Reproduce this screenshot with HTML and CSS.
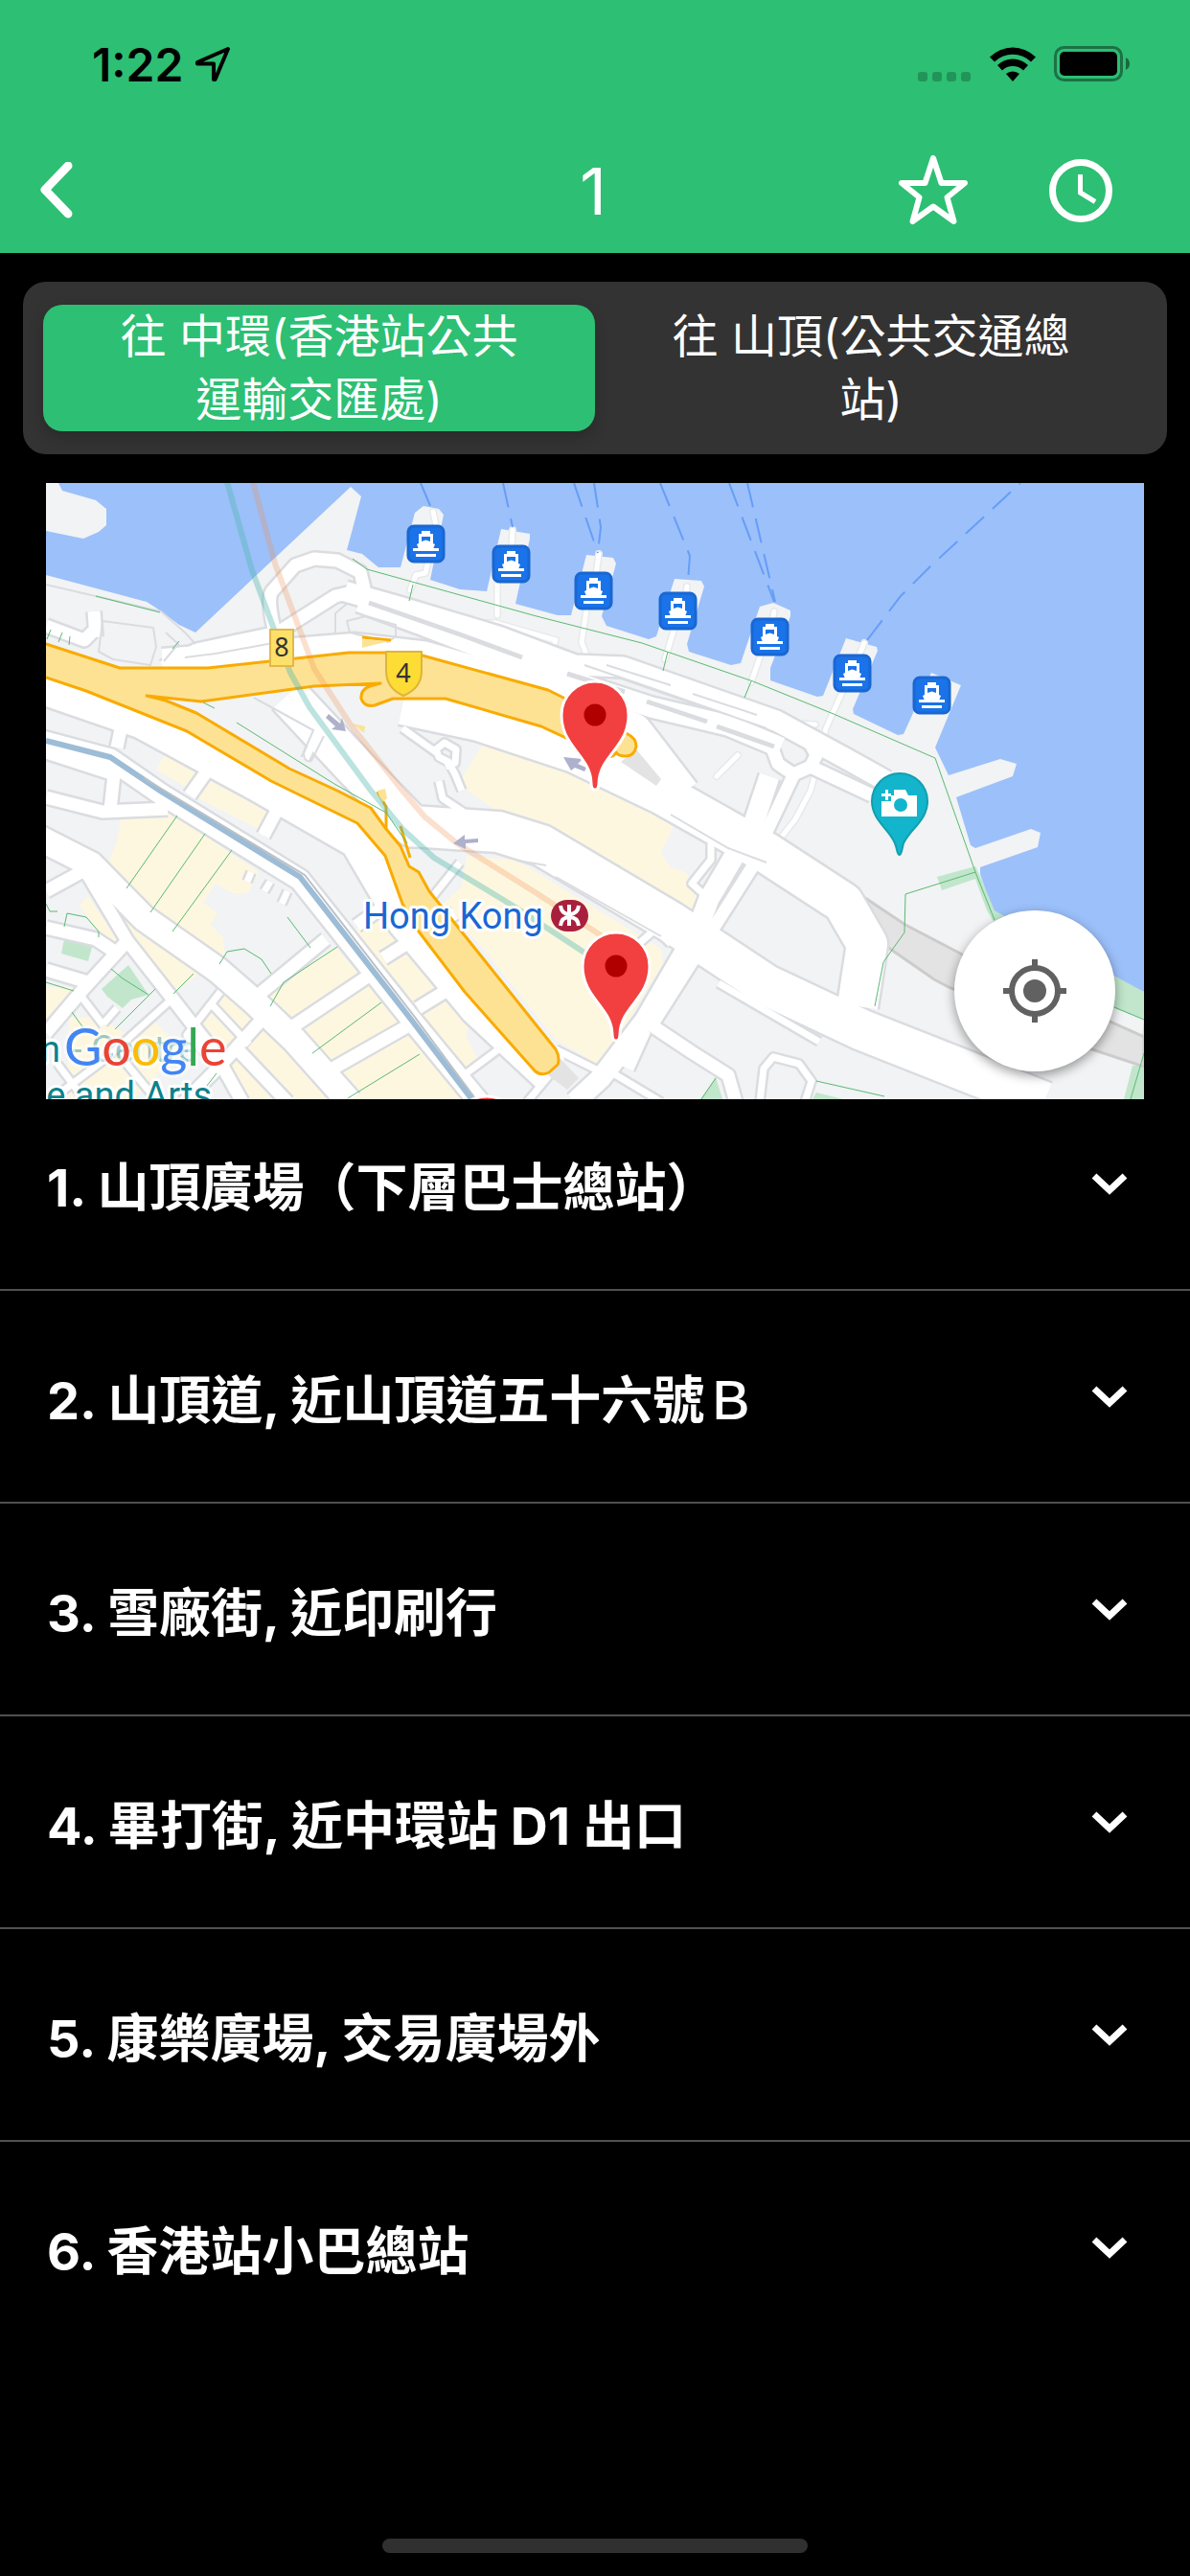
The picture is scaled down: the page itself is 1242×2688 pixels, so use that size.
FILE: index.html
```html
<!DOCTYPE html>
<html lang="zh-Hant">
<head>
    <meta charset="UTF-8">
    <meta name="viewport" content="width=device-width, initial-scale=1.0">
    <title>路線 1</title>
    <link rel="stylesheet" href="styles.css">
</head>
<body>
    <header class="header">
        <div class="status-bar">
            <div class="status-left">
                <span class="time">1:22</span>
                <svg width="38" height="38" viewBox="0 0 38 38"><path d="M35 3 L3 17 V18.500 H20 V35 H21.500 Z" fill="none" stroke="#000" stroke-width="4" stroke-linejoin="round"/></svg>
            </div>
            <div class="status-right">
                <svg class="cell" width="56" height="38" viewBox="0 0 56 38" fill="#000" opacity=".22">
                    <rect x="0" y="27" width="10" height="10" rx="3"/>
                    <rect x="15" y="27" width="10" height="10" rx="3"/>
                    <rect x="30" y="27" width="10" height="10" rx="3"/>
                    <rect x="45" y="27" width="10" height="10" rx="3"/>
                </svg>
                <svg width="48" height="38" viewBox="0 0 48 38">
                    <path d="M0 11.500 A34 34 0 0 1 48 11.500 L43 16.500 A27 27 0 0 0 5 16.500 Z"/>
                    <path d="M8 20 A23 23 0 0 1 40 20 L35 25.500 A16 16 0 0 0 13 25.500 Z"/>
                    <path d="M17 29 A11 11 0 0 1 31 29 L24 37 Z"/>
                </svg>
                <svg width="80" height="38" viewBox="0 0 80 38">
                    <rect x="1.500" y="1.500" width="69" height="34" rx="9" fill="none" stroke="#000" stroke-opacity=".4" stroke-width="3"/>
                    <rect x="6" y="6" width="60" height="25" rx="5"/>
                    <path d="M75 12 Q79 14 79 18.500 Q79 23 75 25 Z" opacity=".45"/>
                </svg>
            </div>
        </div>
        <nav class="nav-bar">
            <button class="icon-btn back" aria-label="返回">
                <svg width="36" height="60" viewBox="0 0 36 60"><path d="M30 4 L6 29 L30 54" fill="none" stroke="#fff" stroke-width="9" stroke-linecap="round" stroke-linejoin="round"/></svg>
            </button>
            <h1>1</h1>
            <div class="nav-actions">
                <button class="icon-btn" aria-label="收藏">
                    <svg width="74" height="74" viewBox="0 0 74 74"><path d="M37 3 L45.500 29 H70 L51.500 44 L58.500 69 L37 53.500 L15.500 69 L22.500 44 L4 29 H28.500 Z" fill="none" stroke="#fff" stroke-width="6" stroke-linejoin="round"/></svg>
                </button>
                <button class="icon-btn" aria-label="時間表">
                    <svg width="66" height="66" viewBox="0 0 66 66" fill="none" stroke="#fff"><circle cx="33" cy="33" r="29.500" stroke-width="7"/><path d="M32.500 16 V35 L48 44.500" stroke-width="5"/></svg>
                </button>
            </div>
        </nav>
    </header>

    <div class="tabs">
        <button class="tab active">往 中環(香港站公共運輸交匯處)</button>
        <button class="tab">往 山頂(公共交通總站)</button>
    </div>

    <section class="map">
        <svg class="map-canvas" viewBox="48 504 1146 643">
            <defs>
                <g id="ferry">
                    <rect x="1" y="1" width="37" height="37" rx="6" fill="#1a73e8" stroke="#1967d2" stroke-width="3"/>
                    <path d="M15 6 H24 V9 H27 V19 L29 20 L27 25 H12 L10 20 L12 19 V9 H15 Z M15 12 V17 L19.500 15.500 L24 17 V12 Z" fill="#fff" fill-rule="evenodd"/>
                    <path d="M6 25.500 H33 M9 31.500 H30" stroke="#fff" stroke-width="3"/>
                </g>
                <g id="pin">
                    <path d="M0 78 C-3 78 -4 75 -4 71 C-5 42 -35 34 -35 0 A35 35 0 0 1 35 0 C35 34 5 42 4 71 C4 75 3 78 0 78 Z" fill="#f23f3f" stroke="#fff" stroke-width="3"/>
                    <circle r="11.500" fill="#b00000"/>
                </g>
                <!-- streets, drawn twice: casing below, white on top -->
                <g id="roads" fill="none" stroke-linejoin="round">
                    <path class="w44" d="M300 725 L370 800 L430 862 L520 868 L565 882 L700 962 L800 1028 L900 1075 L1090 1150"/>
                    <path class="w44" d="M420 735 L500 752 L600 785 L690 828 L800 890 L880 942 L905 985 L895 1050"/>
                    <path class="w44" d="M40 712 L150 750 L270 815 L375 875 L425 960 L500 1050 L575 1120"/>
                    <path class="w44" d="M170 698 L370 682 L440 690 L570 728 L660 765 L710 830"/>
                    <path class="w20" d="M360 617 L420 634 L520 664 L600 694 L650 696 L810 752 L880 790 L925 815"/>
                    <path class="w20" d="M375 628 L440 652 L570 702 L680 738 L760 757 L815 780"/>
                    <path class="w14" d="M170 696 L205 678 L290 660 L350 622 L380 615 M287 660 Q278 625 284 617 L308 590 L328 583 L352 585 L376 597 L381 618"/>
                    <path class="w14" d="M100 665 L98 638 M98 658 L88 668 L48 653"/>
                    <path class="w14" d="M812 755 L840 765 L852 788 L846 800 L828 808 L812 797 L805 778 M830 805 L800 868 M846 800 L910 830"/>
                    <path class="w20" d="M803 810 L787 858 L740 938 L727 972 L673 1065 L627 1125 L600 1150"/>
                    <path class="w14" d="M785 905 L680 1070 L722 1098 L760 1122 L768 1150 M673 1075 L655 1115"/>
                    <path class="w8" d="M750 1026 L855 1087 M793 1150 L797 1115 L807 1103 L834 1110 L847 1128 L840 1150"/>
                    <path class="w8" d="M742 880 L742 897 L722 922 L740 938 M655 995 L695 960 M565 880 L640 925 L700 985"/>
                    <path class="w20" d="M40 772 L115 792 L167 828 L313 918 L430 1065 L500 1150"/>
                    <path class="w26" d="M40 874 L95 902 L150 958 L227 1012 L265 1045 L307 1085 L365 1150"/>
                    <path class="w14" d="M90 910 L133 982 L180 1042 L225 1100 L253 1150"/>
                    <path class="w14" d="M48 832 L107 847 L175 844 M115 845 L119 808 L48 785 M130 742 L122 780 M225 792 L198 830 M293 838 L275 872"/>
                    <path class="w14" d="M340 980 L270 1038 M385 1018 L300 1075 M430 1068 L335 1122 M48 930 L90 907"/>
                    <path class="w14" d="M48 1078 L87 1032 L130 985 M48 968 L100 980 L118 992 M48 1012 L92 1025"/>
                    <path class="w14" d="M275 1062 L227 1115 L192 1150 M248 1095 L300 1150 M372 966 L420 932 M400 1000 L475 953 M436 1052 L480 1025"/>
                    <path class="w8" d="M85 1040 L108 1070 M108 1068 L122 1052 M180 1042 L110 1105 L50 1150 M60 1110 L90 1150 M132 1110 L165 1150 M230 1035 L195 1080 L225 1110 M218 1045 L260 1090"/>
                    <path class="w8" d="M495 855 L462 833 L458 815 M482 825 L475 808 L468 795 L458 790 L455 782 L464 775 L476 782 L475 796 L465 800 M420 760 L455 785"/>
                    <path class="w8" d="M480 900 L440 950 M425 880 L505 878 M527 1090 L480 1125 M575 1120 L550 1150 M640 1120 L690 1150 M580 1095 L630 1120"/>
                    <path class="w8" d="M262 910 L258 920 M282 920 L276 930 M300 930 L294 943 M319 792 L321 788 L331 765"/>
                </g>
            </defs>

            <rect x="48" y="504" width="1146" height="643" fill="#9cc0fa"/>
            <!-- land -->
            <path fill="#f1f3f4" d="M48 504 H61 L65 512 L100 522 L111 531 V548 L103 555 L87 562 L48 554 Z"/>
            <path fill="#f1f3f4" d="M48 600 L153 628 L164 635 L187 652 L204 660 L366 508 L377 518 L362 574 L378 578 L395 592 H418 L433 535 L442 528 L458 531 L463 537 L449 605 L480 615 L508 617 L523 552 L553 557 V562 L538 630 L582 642 H596 L612 579 L640 582 L643 588 L628 643 L633 653 L677 667 L685 664 L704 604 L732 606 L735 612 L717 672 L719 680 L763 694 L773 692 L793 633 L807 629 L825 637 V643 L804 697 V710 L853 727 L859 726 L883 666 L915 675 L916 679 L890 740 L891 745 L937 767 L943 766 L972 702 L1003 715 L976 780 L990 809 L1044 792 L1061 797 L1057 810 L998 832 L1013 882 L1018 885 L1076 865 L1086 869 L1083 884 L1023 905 V912 L1036 951 L1047 957 L1163 1023 L1194 1035 V1147 H48 Z"/>
            <!-- buildings -->
            <g fill="#fef7e0">
                <path d="M128 845 H173 L270 910 L258 933 L243 932 L225 922 L212 942 L227 953 L220 965 L232 977 L235 995 L227 1010 L112 903 L122 878 Z"/>
                <path d="M273 1042 L350 988 L490 1147 H360 Z M225 1110 L280 1070 L350 1147 H250 Z M98 922 L227 1005 L180 1035 Z M83 945 L92 935 L122 980 L115 988 Z"/>
                <path d="M48 1030 H85 L60 1065 L48 1075 Z M72 1062 H105 L140 1085 L160 1065 L190 1095 L140 1147 H70 Z M205 1060 L232 1035 L265 1065 L235 1095 Z"/>
                <path d="M178 776 L213 793 L195 822 L163 803 Z M222 800 L290 835 L270 865 L205 832 Z"/>
                <path d="M370 970 L425 945 L475 1040 L490 1070 L486 1080 L500 1108 L490 1130 L405 1020 Z"/>
                <path d="M510 767 L540 778 L620 817 L667 844 L685 845 L703 862 L690 890 L700 905 L715 910 L733 935 L720 960 L577 875 L517 845 L485 823 L482 812 Z"/>
                <path d="M487 893 L540 898 L690 990 L692 1005 L627 1112 L580 1085 L500 985 L460 945 L482 925 Z"/>
            </g>
            <!-- parks -->
            <path fill="#c1e6cc" d="M67 980 L96 988 L92 1003 L64 995 Z M106 1032 L134 1007 L155 1038 L137 1043 L128 1052 L112 1040 Z M978 915 L1018 904 L1022 912 L1038 950 L1050 957 L1194 1035 V1064 L1163 1052 L1037 962 L1030 950 L1018 917 L983 929 Z M1182 1112 L1190 1112 L1194 1060 V1147 H1173 Z M731 1147 L747 1124 L754 1147 Z M852 1140 L880 1147 H848 Z"/>
            <!-- tunnel road -->
            <path d="M885 925 L945 965 L1012 1000 L1194 1082 V1113 L1140 1095 L990 1030 L975 1022 L900 970 Z" fill="#e3e3e3" stroke="#ccc" stroke-width="3"/>

            <!-- pier lanes -->
            <g fill="none" stroke-linecap="round" stroke-linejoin="round">
                <path stroke="#e8eaea" stroke-width="8" d="M452 534 L455 548 M447 585 L444 598 L434 600 L428 616 M535 553 L534 570 M519 605 L519 642 M625 578 L622 600 M612 637 L607 670 L612 683 M717 612 L716 620 M704 655 L694 688 M808 638 L806 648 M794 683 L784 712 M902 671 L897 683 M880 720 L862 760 L855 790 L846 825 L830 855 L812 878 M497 650 L517 650 L580 668 L578 674 L562 668 L557 680 M770 788 L748 810 M820 755 L851 756"/>
                <path stroke="#fff" stroke-width="5" d="M452 534 L455 548 M447 585 L444 598 L434 600 L428 616 M535 553 L534 570 M519 605 L519 642 M625 578 L622 600 M612 637 L607 670 L612 683 M717 612 L716 620 M704 655 L694 688 M808 638 L806 648 M794 683 L784 712 M902 671 L897 683 M880 720 L862 760 L855 790 L846 825 L830 855 L812 878 M497 650 L517 650 L580 668 L578 674 L562 668 L557 680 M770 788 L748 810 M820 755 L851 756"/>
            </g>

            <use href="#roads" class="casing"/>
            <use href="#roads" class="street"/>
            <path d="M648 795 L664 782 L690 813 L685 820 Z M572 1122 L585 1105 L604 1125 L592 1137 Z" fill="#e3e3e3"/>
            <path fill="none" stroke="#dadce0" stroke-width="2" stroke-linejoin="round" d="M107 648 L160 655 L163 675 L157 694 L118 688 L103 680 Z M48 610 L168 638 L193 660 L204 672 M173 660 L186 672 L171 690 M193 686 L225 682 L290 670 M362 648 L382 643 L413 652 V664 L405 670 L365 660 Z M350 660 V640 L362 630 M265 728 L327 762 L317 785 Q317 796 325 794 L338 768"/>
            <path fill="none" stroke="#dadce0" stroke-width="5" d="M385 629 L480 662 L545 686 M592 703 L652 722 M675 732 L738 753 M748 758 L808 779"/>
            <path fill="none" stroke="#dadce0" stroke-width="2" d="M633 694 L700 715 M723 724 L790 746 M610 694 L680 718 L800 760 M540 898 L570 903 M580 915 L690 977 M700 850 L760 885 L800 900"/>

            <!-- railways -->
            <path fill="none" stroke="#9dbcd6" stroke-width="6" d="M48 773 L115 790 L167 825 L313 915 L430 1065 L494 1149"/>
            <path fill="none" stroke="#b9c0c7" stroke-width="2" d="M150 812 L318 913 L432 1060 L498 1149"/>

            <!-- expressway -->
            <path fill="#fde293" stroke="#f9ab00" stroke-width="3" stroke-linejoin="round" d="M40 669 L48 672 L125 697 H217 L364 681 H402 L441 684 L572 720 L590 729 L655 766 Q664 770 664 779 Q662 789 653 789 Q645 789 643 785 Q640 791 632 789 L595 772 L565 758 L465 729 H410 L391 736 Q380 738 377 729 Q376 720 386 716 L397 713 L328 716 L210 732 L153 726 L173 731 L205 744 L302 802 L352 825 L387 843 L403 865 L418 883 L427 904 L437 910 L448 930 L580 1095 Q585 1104 582 1111 L573 1119 Q563 1124 556 1115 L485 1035 L437 972 L420 943 L402 893 L373 859 L283 815 L195 763 L90 721 L48 707 L40 704 Z"/>
            <path fill="none" stroke="#f9ab00" stroke-width="3" d="M378 665 L408 668 M394 826 L403 842 V865 M418 862 L428 895"/>
            <path fill="#fde293" d="M378 667 L406 669 L378 676 Z M394 825 L402 823 L404 833 L398 838 Z M368 755 L381 758 L380 765 Z"/>

            <!-- footpaths -->
            <path fill="none" stroke="#5bb974" d="M368 583 L383 594 L430 607 L560 643 L670 671 L786 711 L870 745 L976 791 L1018 910 L1038 960 M100 622 L167 639 M53 657 L49 667 M65 660 L61 670 M73 664 L72 673 M187 669 L180 677 M212 733 L224 739 M247 754 L349 818 L403 848 L425 880 M431 610 L427 627 M697 680 L692 700 M784 711 L777 728 M185 851 L132 927 M214 870 L157 952 M242 887 L180 972 M300 957 L324 989 M352 988 L296 1025 L282 1050 M398 1046 L326 1099 M438 1100 L363 1146 M202 1016 L181 1037 M162 1032 L120 1074 M116 1011 L128 1021 L155 1038 M48 943 L52 951 L60 951 M67 967 L70 953 L90 957 L103 972 V978 M48 1025 L77 1034 M75 1056 L88 1074 M229 1006 L237 993 L255 990 L273 1001 L283 1016 M1018 910 L945 933 L944 973 L922 1004 L913 1050 M1163 1051 L1194 1064 M1194 1099 L1180 1147 M226 1120 L205 1147 M852 1128 L923 1144 M747 1125 L732 1147"/>

            <!-- ferry routes -->
            <path fill="none" stroke="#669df6" stroke-width="2" stroke-dasharray="26 12" d="M439 504 L450 530 M525 504 L535 550 M599 504 L624 577 M620 504 L627 550 L624 577 M689 504 L720 580 L718 606 M761 504 L808 628 M780 504 L809 628 M905 668 L940 622 L970 592 L1065 504"/>

            <!-- transit lines -->
            <path fill="none" stroke="#4db6ac" stroke-opacity=".38" stroke-width="6" d="M237 503 L263 595 L303 702 L323 738 L387 825 L420 865 L453 895 L540 948 L613 996"/>
            <path fill="none" stroke="#ef8d4e" stroke-opacity=".27" stroke-width="6" d="M264 503 L287 588 L328 698 L365 755 L420 825 L443 852 L477 880 L560 932 L630 978"/>

            <!-- one-way arrows -->
            <path fill="#aeb1cb" d="M343 745 L355 755 L357 749 L361 763 L346 761 L350 758 L340 749 Z M588 790 L608 792 L603 797 L612 801 L610 805 L600 801 L596 804 Z M473 880 L485 871 V876 L499 875 V879 L486 880 V886 Z"/>

            <!-- road shields -->
            <rect x="282" y="657" width="24" height="38" fill="#fde068" stroke="#e2b84c" stroke-width="2"/>
            <text class="shield" x="294" y="685">8</text>
            <path d="M403 680 H440 V700 Q440 718 421 726 Q403 718 403 700 Z" fill="#fddc35" stroke="#e0b437" stroke-width="2"/>
            <text class="shield" x="421" y="712">4</text>

            <use href="#ferry" x="425" y="548"/>
            <use href="#ferry" x="514" y="569"/>
            <use href="#ferry" x="600" y="597"/>
            <use href="#ferry" x="688" y="618"/>
            <use href="#ferry" x="784" y="645"/>
            <use href="#ferry" x="870" y="683"/>
            <use href="#ferry" x="953" y="706"/>

            <!-- viewpoint marker -->
            <path d="M939 892 C936 892 937 887 934 880 C928 865 910 856 910 836 A29 29 0 0 1 968 836 C968 856 950 865 943 880 C941 887 941 892 939 892 Z" fill="#12b5cb" stroke="#129eaf" stroke-width="2"/>
            <path d="M933 824 H945 L948 830 H957 V852 H920 V836 H930 V830 H933 Z M924 824 H927 V828 H930 V831 H927 V835 H924 V831 H920 V828 H924 Z" fill="#fff"/>
            <circle cx="940" cy="840" r="7" fill="#12b5cb"/>

            <text class="place" x="379" y="969">Hong Kong</text>
            <rect x="575" y="939" width="39" height="33" rx="17" fill="#a9203e"/>
            <path d="M594 944 V966 M585 945 Q586 954 594 954 Q603 954 604 945 M585 966 Q586 957 594 957 Q603 957 604 966" fill="none" stroke="#fff" stroke-width="4"/>

            <text class="poi" x="42" y="1108">n</text>
            <text class="poi faded" x="75" y="1108">- Centre</text>
            <text class="poi" x="221" y="1156" text-anchor="end">e and Arts</text>
            <text class="google" x="67" y="1112"><tspan fill="#4285f4">G</tspan><tspan fill="#ea4335">o</tspan><tspan fill="#fbbc05">o</tspan><tspan fill="#4285f4">g</tspan><tspan fill="#34a853">l</tspan><tspan fill="#ea4335">e</tspan></text>

            <use href="#pin" x="621" y="746"/>
            <use href="#pin" x="643" y="1008"/>
            <use href="#pin" x="508" y="1179"/>
        </svg>
        <button class="locate-btn" aria-label="我的位置">
            <svg width="66" height="66" viewBox="0 0 66 66" fill="none" stroke="#616161" stroke-width="6"><circle cx="33" cy="33" r="24"/><path d="M33 0 V8 M33 58 V66 M0 33 H8 M58 33 H66"/><circle cx="33" cy="33" r="12" fill="#616161" stroke="none"/></svg>
        </button>
    </section>

    <ul class="stops">
        <li><button class="stop"><span>1. 山頂廣場（下層巴士總站）</span><svg class="chevron" viewBox="0 0 38 24"><path d="M3 4 L19 19 L35 4"/></svg></button></li>
        <li><button class="stop"><span>2. 山頂道, 近山頂道五十六號<span class="light">Ｂ</span></span><svg class="chevron" viewBox="0 0 38 24"><path d="M3 4 L19 19 L35 4"/></svg></button></li>
        <li><button class="stop"><span>3. 雪廠街, 近印刷行</span><svg class="chevron" viewBox="0 0 38 24"><path d="M3 4 L19 19 L35 4"/></svg></button></li>
        <li><button class="stop"><span>4. 畢打街, 近中環站 D1 出口</span><svg class="chevron" viewBox="0 0 38 24"><path d="M3 4 L19 19 L35 4"/></svg></button></li>
        <li><button class="stop"><span>5. 康樂廣場, 交易廣場外</span><svg class="chevron" viewBox="0 0 38 24"><path d="M3 4 L19 19 L35 4"/></svg></button></li>
        <li><button class="stop"><span>6. 香港站小巴總站</span><svg class="chevron" viewBox="0 0 38 24"><path d="M3 4 L19 19 L35 4"/></svg></button></li>
    </ul>

    <div class="home-indicator"></div>
</body>
</html>
```
FILE: styles.css
```css
* {
    box-sizing: border-box;
}
body {
    margin: 0;
    min-height: 100vh;
    display: flex;
    flex-direction: column;
    background: #000;
    color: #fff;
    font-family: Inter, "Noto Sans CJK TC", sans-serif;
}
button {
    padding: 0;
    border: none;
    background: none;
    color: inherit;
    font: inherit;
    cursor: pointer;
}
svg {
    display: block;
}
.header {
    background: #2dbf73;
}
.status-bar {
    display: flex;
    justify-content: space-between;
    align-items: center;
    height: 134px;
    padding: 0 62px 0 96px;
    color: #000;
}
.status-left {
    display: flex;
    align-items: center;
    gap: 12px;
}
.status-right {
    display: flex;
    align-items: center;
    gap: 19px;
}
.time {
    font-size: 48px;
    font-weight: 600;
}
.nav-bar {
    display: grid;
    grid-template-columns: 1fr auto 1fr;
    align-items: center;
    height: 130px;
    padding: 0 81px 0 41px;
}
.nav-bar h1 {
    margin: 0;
    padding-left: 36px;
    font-size: 68px;
    font-weight: 400;
}
.nav-actions {
    display: flex;
    justify-content: flex-end;
    align-items: center;
    gap: 84px;
}
.back {
    justify-self: start;
}
.tabs {
    display: flex;
    margin: 30px 24px;
    padding: 24px 21px;
    background: #333;
    border-radius: 24px;
}
.tab {
    flex: 1;
    padding: 0 64px;
    border-radius: 20px;
    font-size: 48px;
    line-height: 66px;
}
.tab.active {
    background: #2dbf73;
    box-shadow: 0 6px 16px rgba(0, 0, 0, 0.2);
}
.map {
    position: relative;
    margin: 0 48px;
}
.map-canvas {
    width: 100%;
}
.street {
    stroke: #fff;
}
.casing {
    --edge: 5px;
    stroke: #dadce0;
}
.w8 {
    stroke-width: calc(7px + var(--edge, 0px));
}
.w14 {
    stroke-width: calc(13px + var(--edge, 0px));
}
.w20 {
    stroke-width: calc(21px + var(--edge, 0px));
}
.w26 {
    stroke-width: calc(26px + var(--edge, 0px));
}
.w44 {
    stroke-width: calc(42px + var(--edge, 0px));
}
.shield {
    font-family: "Noto Sans", sans-serif;
    font-size: 27px;
    text-anchor: middle;
    fill: #333;
}
.place, .poi {
    font-family: Roboto, sans-serif;
    font-size: 38px;
    fill: #1967d2;
    stroke: #fff;
    stroke-width: 6px;
    stroke-linejoin: round;
    paint-order: stroke;
}
.poi {
    fill: #0c828c;
}
.faded {
    opacity: 0.4;
}
.google {
    font-family: Lato, sans-serif;
    font-size: 54px;
    stroke: rgba(255, 255, 255, 0.6);
    stroke-width: 6px;
    paint-order: stroke;
}
.locate-btn {
    position: absolute;
    right: 30px;
    bottom: 29px;
    display: flex;
    justify-content: center;
    align-items: center;
    width: 168px;
    height: 168px;
    border-radius: 50%;
    background: #fff;
    box-shadow: 0 4px 12px rgba(0, 0, 0, 0.4);
}
.stops {
    margin: -22px 0 0;
    padding: 0;
    list-style: none;
}
.stops li + li {
    border-top: 2px solid #505050;
}
.stop {
    display: flex;
    justify-content: space-between;
    align-items: center;
    width: 100%;
    height: 220px;
    padding: 0 65px 0 49px;
    font-size: 54px;
    font-weight: 700;
    text-align: left;
}
.light {
    font-weight: 500;
}
.chevron {
    width: 38px;
    height: 24px;
    fill: none;
    stroke: #fff;
    stroke-width: 7px;
}
.home-indicator {
    width: 444px;
    height: 15px;
    margin: auto auto 24px;
    border-radius: 8px;
    background: #303030;
}
```
